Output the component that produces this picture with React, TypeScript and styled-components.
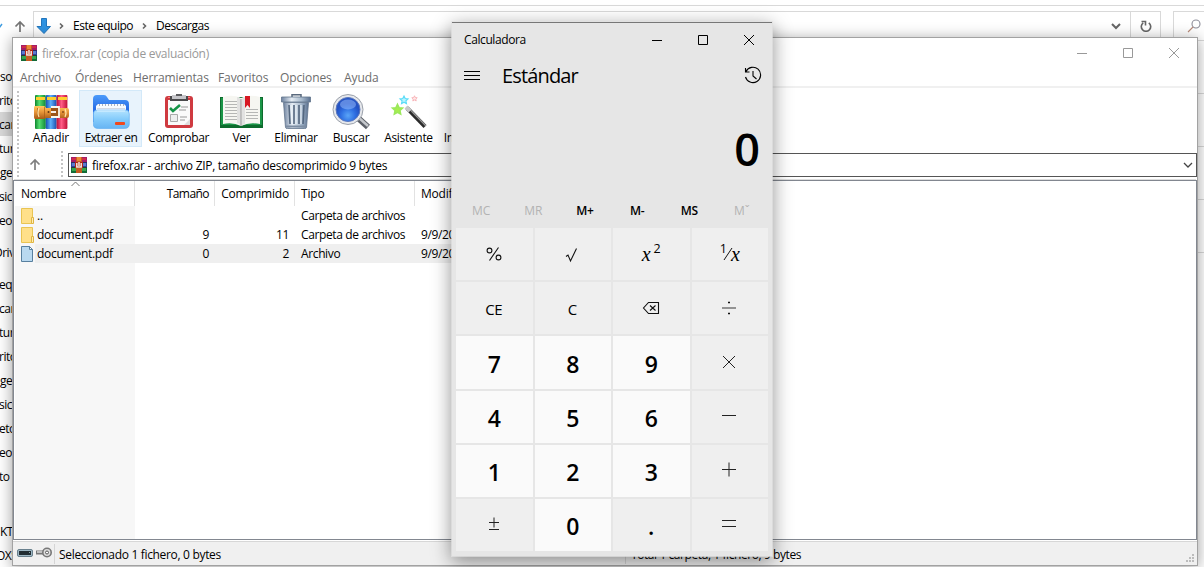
import React from 'react';
import styled, { createGlobalStyle, css } from 'styled-components';

const Global = createGlobalStyle`
  * { box-sizing: border-box; }
  html, body { margin: 0; background: #fff; overflow: hidden; }
  body { font-family: "Open Sans", "Noto Sans", sans-serif; font-size: 12px; color: #000; }
  svg { display: block; flex: none; }
`;

const Desktop = styled.div`
  position: relative;
  width: 1204px;
  height: 567px;
  overflow: hidden;
  background: #fff;
`;

const Label = styled.span<{ $ls?: number }>`
  letter-spacing: ${p => p.$ls ?? -0.2}px;
  white-space: pre;
`;

/* Explorer window at the back */
const Explorer = styled.div`
  display: flex;
  flex-direction: column;
  height: 567px;
`;
const ExplorerTop = styled.div`
  height: 6px;
  flex: none;
  border-bottom: 1px solid #d9d9d9;
`;
const ExplorerBar = styled.div`
  display: flex;
  padding-top: 5px;
  height: 35px;
  flex: none;
`;
const ExplorerNav = styled.div`
  width: 33px;
  flex: none;
  height: 30px;
  display: flex;
  align-items: center;
  justify-content: space-between;
  padding: 1px 7px 0 0;
`;
const Crumbs = styled.div`
  width: 1128px;
  flex: none;
  height: 30px;
  border: 1px solid #d9d9d9;
  display: flex;
  align-items: center;
  padding-left: 2px;
`;
const CrumbText = styled.span<{ $w: number }>`
  width: ${p => p.$w}px;
  display: block;
  line-height: 28px;
  letter-spacing: -0.5px;
  white-space: nowrap;
`;
const CrumbSep = styled.div`
  width: 21px;
  display: flex;
  justify-content: center;
`;
const CrumbEnd = styled.div`
  margin-left: auto;
  display: flex;
  align-items: center;
  height: 28px;
`;
const Refresh = styled.div`
  width: 30px;
  height: 28px;
  margin-left: 9px;
  border-left: 1px solid #d9d9d9;
  display: flex;
  align-items: center;
  justify-content: center;
`;
const SearchBox = styled.div`
  margin-left: 12px;
  width: 60px;
  flex: none;
  height: 30px;
  border: 1px solid #d9d9d9;
  padding: 7px 0 0 13px;
`;
const ExplorerBody = styled.div`
  display: flex;
  flex: 1;
  justify-content: space-between;
`;
const Tree = styled.div`
  width: 26px;
  padding-top: 23px;
  overflow: hidden;
`;
const TreeItem = styled.div<{ $gap?: number; $on?: boolean; $x?: number }>`
  height: 24px;
  line-height: 25px;
  margin-top: ${p => p.$gap ?? 0}px;
  background: ${p => (p.$on ? '#d9d9d9' : 'transparent')};
  text-indent: ${p => p.$x ?? -1}px;
  white-space: nowrap;
  letter-spacing: -0.5px;
`;
const Strip = styled.div`
  width: 10px;
  display: flex;
  flex-direction: column;
`;
const StripCell = styled.div`
  height: 53px;
  border-bottom: 1px solid #d9d9d9;
`;

/* Archive window */
const Archive = styled.div`
  position: absolute;
  left: 12px;
  top: 37px;
  width: 1186px;
  height: 529px;
  border: 1px solid #a2a2a2;
  background: #fff;
  box-shadow: 0 2px 14px rgba(0, 0, 0, 0.38);
  display: flex;
  flex-direction: column;
`;
const TitleBar = styled.div`
  height: 30px;
  flex: none;
  display: flex;
  align-items: center;
  padding: 0 17px 0 8px;
  gap: 5px;
  color: #999;
`;
const WinButtons = styled.div`
  margin-left: auto;
  display: flex;
  gap: 34px;
`;
const MenuBar = styled.div`
  height: 20px;
  flex: none;
  display: flex;
  padding-left: 7px;
  border-bottom: 2px solid #f0f0f0;
  color: #6d6d6d;
  line-height: 19px;
`;
const MenuItem = styled.span<{ $w: number }>`
  width: ${p => p.$w}px;
  letter-spacing: -0.1px;
  white-space: nowrap;
`;
const ToolBar = styled.div`
  height: 62px;
  flex: none;
  display: flex;
  padding: 2px 0 0 4px;
`;
const Grip = styled.div`
  width: 2px;
  margin-top: 1px;
  background: repeating-linear-gradient(#c4c4c4 0 2px, transparent 2px 4px);
`;
const Tool = styled.div<{ $w: number; $on?: boolean }>`
  width: ${p => p.$w}px;
  height: 57px;
  flex: none;
  display: flex;
  flex-direction: column;
  align-items: center;
  padding: 4px 0 0 1px;
  ${p =>
    p.$on &&
    css`
      background: #e8f3fc;
      box-shadow: inset 0 0 0 1px #d3e9f9;
    `}
`;
const IconSlot = styled.div`
  height: 35px;
`;
const ToolText = styled.span<{ $ls?: number }>`
  margin-top: 1px;
  line-height: 16px;
  letter-spacing: ${p => p.$ls ?? -0.25}px;
  white-space: nowrap;
`;
const AddressRow = styled.div`
  height: 28px;
  flex: none;
  display: flex;
  padding-left: 4px;
`;
const UpButton = styled.div`
  width: 42px;
  display: flex;
  align-items: center;
  padding-left: 10px;
`;
const Combo = styled.div`
  margin: 3px 0 0 5px;
  width: 1129px;
  height: 24px;
  border: 1px solid #555;
  display: flex;
  align-items: center;
  padding: 0 3px 0 2px;
  gap: 5px;
`;
const ComboArrow = styled.div`
  margin-left: auto;
`;
const ListFrame = styled.div`
  border: 1px solid #828790;
  margin-top: 2px;
  box-shadow: 0 -2px 0 -1px #dcdcdc;
  flex: 1;
  display: flex;
  flex-direction: column;
  background: linear-gradient(#f7f7f7, #f7f7f7) 1px 25px / 120px 333px no-repeat #fff;
`;
const HeadRow = styled.div`
  position: relative;
  height: 25px;
  display: flex;
  line-height: 25px;
`;
const HeadCell = styled.div<{ $w: number; $right?: boolean; $ls?: number }>`
  width: ${p => p.$w}px;
  border-right: 1px solid #e2e2e2;
  text-align: ${p => (p.$right ? 'right' : 'left')};
  padding: 0 ${p => (p.$right ? 5 : 0)}px 0 6px;
  letter-spacing: ${p => p.$ls ?? -0.2}px;
  white-space: nowrap;
`;
const SortMark = styled.div`
  position: absolute;
  left: 57px;
  top: 0;
`;
const FileRow = styled.div<{ $on?: boolean }>`
  height: 19px;
  display: flex;
  line-height: 19px;
  background: ${p => (p.$on ? 'linear-gradient(#efefef,#efefef) 21px 0 / 500px 19px no-repeat' : 'none')};
`;
const NameCell = styled.div`
  width: 121px;
  padding-left: 7px;
  display: flex;
  align-items: center;
  gap: 3px;
`;
const Cell = styled.div<{ $w: number; $right?: boolean }>`
  width: ${p => p.$w}px;
  padding: 0 6px;
  text-align: ${p => (p.$right ? 'right' : 'left')};
  letter-spacing: -0.37px;
  white-space: nowrap;
`;
const StatusBar = styled.div`
  height: 24px;
  flex: none;
  margin-top: 1px;
  border-top: 1px solid #d7d7d7;
  background: #f0f0f0;
  display: flex;
  align-items: center;
`;
const StatusIcons = styled.div`
  width: 42px;
  height: 20px;
  display: flex;
  gap: 3px;
  align-items: center;
  padding: 0 0 2px 4px;
  border-right: 1px solid #d5d5d5;
`;
const StatusPane = styled.div<{ $w: number; $last?: boolean }>`
  width: ${p => p.$w}px;
  height: 20px;
  line-height: 21px;
  padding-left: ${p => (p.$last ? 5 : 4)}px;
  border-right: ${p => (p.$last ? 'none' : '1px solid #d5d5d5')};
`;
const SizeGrip = styled.div`
  margin-left: auto;
  padding: 9px 2px 0 0;
`;

/* Calculator window */
const Calc = styled.div`
  position: absolute;
  left: 452px;
  top: 22px;
  width: 320px;
  height: 534px;
  background: #e6e6e6;
  border-top: 1px solid #777;
  box-shadow: 0 0 0 1px rgba(225, 225, 225, 0.75), 0 5px 18px 1px rgba(0, 0, 0, 0.42);
  display: flex;
  flex-direction: column;
`;
const CalcTitle = styled.div`
  height: 32px;
  display: flex;
  align-items: center;
  padding: 1px 17px 0 12px;
`;
const CalcMode = styled.div`
  height: 41px;
  display: flex;
  align-items: center;
  padding: 0 10px 0 12px;
  font-size: 20px;
`;
const MenuGlyph = styled.div`
  padding-bottom: 1px;
`;
const ModeName = styled.span`
  margin-left: 22px;
  letter-spacing: -0.85px;
  line-height: 41px;
`;
const History = styled.div`
  margin-left: auto;
  padding-bottom: 1px;
`;
const Display = styled.div`
  height: 102px;
  padding: 23px 12px 0 0;
  text-align: right;
  font: 600 45px/60px "Open Sans", sans-serif;
`;
const Memory = styled.div`
  height: 30px;
  margin: 0 4px 0 3px;
  display: grid;
  grid-template-columns: repeat(6, 1fr);
`;
const MemKey = styled.div<{ $off?: boolean }>`
  text-align: center;
  font-size: 12px;
  line-height: 26px;
  font-weight: ${p => (p.$off ? 400 : 600)};
  letter-spacing: ${p => (p.$off ? 0 : -0.3)}px;
  padding-right: ${p => (p.$off ? 0 : 1)}px;
  color: ${p => (p.$off ? '#b3b3b3' : '#000')};
`;
const Keys = styled.div`
  margin: 0 4px;
  height: 323px;
  display: grid;
  grid-template-columns: repeat(4, minmax(0, 1fr));
  grid-template-rows: repeat(6, minmax(0, 1fr));
  gap: 2px;
`;
const Key = styled.div<{ $num?: boolean }>`
  background: ${p => (p.$num ? '#fafafa' : '#efefef')};
  display: flex;
  align-items: center;
  justify-content: center;
  font-size: ${p => (p.$num ? 23 : 15)}px;
  font-weight: ${p => (p.$num ? 600 : 400)};
  padding-top: ${p => (p.$num ? 2.5 : 0)}px;
`;
const OpSlot = styled.div`
  padding: 0 1px 1px 0;
`;
const Dot = styled.span`
  font-size: 23px;
  font-weight: 600;
  padding-top: 3px;
`;
const Func = styled.span`
  display: flex;
  align-items: center;
  font-family: "Liberation Serif", serif;
  font-style: italic;
  font-size: 20px;
  line-height: 24px;
`;
const Sup = styled.span<{ $gap?: number }>`
  font-family: "Open Sans", sans-serif;
  font-size: 12.5px;
  font-style: normal;
  padding-bottom: 11px;
  margin-left: ${p => p.$gap ?? 0}px;
`;
const Slash = styled.svg`
  margin: 0 -2px 0 -4px;
`;
const Small = styled.span`
  letter-spacing: -0.4px;
  padding: 1px 1px 0 0;
`;

const RarIcon = () => (
  <svg width="16" height="16" viewBox="0 0 16 16">
    <path fill="#a51d68" d="M0 0h16v5H0z" />
    <path fill="#cf2b48" d="M1 1h4v2H1zM11 1h4v2h-4z" />
    <path fill="#2b419b" d="M0 5h16v5H0z" />
    <path fill="#5b7bd0" d="M1 6h3v3H1zM12 6h3v3h-3z" />
    <path fill="#146b37" d="M0 10h16v6H0z" />
    <path fill="#36a64b" d="M1 11h4v3H1zM11 11h4v3h-4z" />
    <path fill="#c65c22" d="M5 0h6v16H5z" />
    <path fill="#e98b36" d="M6 0h4v4H6z" />
    <path fill="#b22618" d="M4 5h8v6H4z" />
    <path fill="none" stroke="#f4e9dc" strokeWidth="1.5" d="M5.8 6v4h4.400V6M8 5v4" />
    <path stroke="#30203d" d="M0 5.5h4M12 5.5h4M0 10.5h4M12 10.5h4" opacity=".6" />
  </svg>
);

const BooksIcon = () => (
  <svg width="36" height="35" viewBox="0 0 36 35">
    <defs>
      <linearGradient id="bg"><stop stopColor="#0d872e" /><stop offset=".4" stopColor="#55dd70" /><stop offset="1" stopColor="#108a35" /></linearGradient>
      <linearGradient id="bb"><stop stopColor="#174fae" /><stop offset=".45" stopColor="#5eb0fa" /><stop offset="1" stopColor="#1a4fae" /></linearGradient>
      <linearGradient id="br"><stop stopColor="#b8103a" /><stop offset=".45" stopColor="#ff5c86" /><stop offset="1" stopColor="#c01038" /></linearGradient>
      <linearGradient id="bo" x2="0" y2="1"><stop stopColor="#ffc95e" /><stop offset=".45" stopColor="#e9973a" /><stop offset="1" stopColor="#a85a16" /></linearGradient>
    </defs>
    <rect x="2" y="1" width="10.800" height="34" rx="1" fill="url(#bg)" />
    <rect x="12.800" y="1" width="10.800" height="34" rx="1" fill="url(#bb)" />
    <rect x="23.600" y="1" width="10.800" height="34" rx="1" fill="url(#br)" />
    <path fill="#ffcf2e" d="M3 3h9v3H3zM14 3h9v3h-9zM25 3h9v3h-9z" />
    <path fill="url(#bo)" d="M2 12h9q2 1 2 2h21q2 0 2 2v6q0 2-2 2H13l-2 1H2q-1 0-1-2V14q0-2 1-2z" />
    <path fill="none" stroke="#a65d16" d="M11.500 13v11M4.500 14v9" opacity=".7" />
    <path fill="none" stroke="#ffe3a6" strokeWidth="1.200" d="M6 14q-2 5 0 9M32 15q2 4 0 8" />
    <path fill="#9c5418" d="M18 13h9v11h-9z" />
    <path fill="none" stroke="#fbf8ee" strokeWidth="1.800" d="M18 13h8v10h-8" />
    <path stroke="#fff" strokeWidth="1.800" d="M18 18h5" />
    <circle cx="15.500" cy="18" r="1" fill="#5f3511" /><circle cx="30" cy="18" r="1" fill="#8a4c18" />
  </svg>
);

const FolderIcon = () => (
  <svg width="37" height="35" viewBox="0 0 37 35">
    <defs>
      <linearGradient id="f1" x2="0" y2="1"><stop stopColor="#4b9bfb" /><stop offset=".5" stopColor="#2b6fe6" /><stop offset="1" stopColor="#2b6fe6" /></linearGradient>
      <linearGradient id="f2" x2="0" y2="1"><stop stopColor="#b4e3ff" /><stop offset=".5" stopColor="#84cbfb" /><stop offset="1" stopColor="#67b4f3" /></linearGradient>
    </defs>
    <path fill="url(#f1)" d="M0 5q0-4 4-4h7q2 0 3 2l2 3h16q4 0 4 4v18H0z" />
    <path fill="#f7faff" d="M3 12l2-2h26l2 2v9H3z" />
    <path stroke="#a9aeba" strokeWidth="2" d="M6 11h25" strokeDasharray="1 2" />
    <path stroke="#d4d9e4" d="M4 14.500h28" />
    <path fill="url(#f2)" stroke="#5aa9f0" strokeWidth=".6" d="M.3 20q0-4 4-4h28q4 0 4 4v10q0 4.500-5 4.500h-26q-5 0-5-4.500z" />
    <path stroke="#def4ff" d="M4 17h28" />
    <rect x="22" y="28" width="10" height="3" rx="1" fill="#f0481c" />
  </svg>
);

const ClipIcon = () => (
  <svg width="30" height="35" viewBox="0 0 30 35">
    <rect x="1" y="2" width="28" height="32" rx="3" fill="#cf3a40" />
    <path stroke="#ff7f80" d="M4 3.500h22" />
    <path fill="#fafafa" d="M4 6h22v25H4z" />
    <path fill="#4a4a4c" d="M6 2h18v5H6z" />
    <path fill="#c6c6ca" d="M8 1h14v4H8z" />
    <path fill="#5d5d60" d="M12 0h6v2h-6z" />
    <path fill="none" stroke="#159447" strokeWidth="2.600" d="M6 14l3 3 7-6" />
    <path stroke="#999" strokeWidth="1.200" d="M17 13h7M15 16h7M16 23h7M16 26h5" />
    <path fill="#eee" stroke="#aaa" d="M6.500 20.500h7v7h-7z" />
    <path fill="#ddd" d="M20 31l6-6v6z" />
  </svg>
);

const BookIcon = () => (
  <svg width="43" height="35" viewBox="0 0 43 35">
    <path fill="#0d6b2d" d="M0 3h43v31H0z" />
    <path fill="#1b9547" d="M1 4h41v27H1z" />
    <path fill="#f6f6f1" d="M3 3q10-3 18 1 8-4 19-1v27q-11-2-19 2-8-4-18-2z" />
    <path fill="#ddd" d="M17 3q4 1 4 3v26q-2-3-4-3zM22 5l3-2v27l-4 2z" opacity=".8" />
    <path stroke="#b6b7b5" d="M5 7.500h12M5 10.500h12M5 13.500h12M5 16.500h12M5 19.500h12M5 22.500h12M5 25.500h12M26 15.500h12M26 18.500h12M26 21.500h12M26 24.500h12" />
    <path fill="#d71923" d="M25 2h5v12l-2.500-3-2.500 3z" />
    <path stroke="#999" d="M21 5v27" />
  </svg>
);

const TrashIcon = () => (
  <svg width="32" height="36" viewBox="0 0 32 36">
    <defs><linearGradient id="tr"><stop stopColor="#6f83a0" /><stop offset=".35" stopColor="#e6edf4" /><stop offset=".7" stopColor="#a7b9cc" /><stop offset="1" stopColor="#5b7190" /></linearGradient></defs>
    <path fill="none" stroke="#59697d" strokeWidth="1.500" d="M12 3V.8h9V3" />
    <path fill="url(#tr)" stroke="#61738c" strokeWidth=".8" d="M1.500 3h29v5h-29z" />
    <path fill="url(#tr)" stroke="#61738c" strokeWidth=".8" d="M3.500 8.500h25l-2 25q0 1-2 1h-17q-2 0-2-1z" />
    <path stroke="#54677f" strokeWidth="1.600" d="M9 11l1 19M14 11v19M19 11v19M24 11l-1 19" />
    <path stroke="#edf4fa" d="M11 11l1 19M16 11v19M21 11v19" />
    <path stroke="#7c8da3" strokeWidth="2" d="M6 32.500h20" />
  </svg>
);

const MagnifierIcon = () => (
  <svg width="38" height="36" viewBox="0 0 38 36">
    <defs><radialGradient id="mg" cx=".5" cy=".75"><stop stopColor="#5aa5f8" /><stop offset=".6" stopColor="#2f6fe2" /><stop offset="1" stopColor="#2453c4" /></radialGradient></defs>
    <path stroke="#5c6068" strokeWidth="6" d="M26 24l10 9" />
    <path stroke="#c4c7cb" strokeWidth="2.500" d="M26 23l10 9" />
    <circle cx="16" cy="15.500" r="15" fill="#e6e8ec" stroke="#9aa0aa" />
    <circle cx="16" cy="15.500" r="12" fill="url(#mg)" stroke="#5a77bd" />
    <ellipse cx="16" cy="10.500" rx="8" ry="5" fill="#9cc2ff" opacity=".5" />
  </svg>
);

const star = 'M0-5l1.500 3.200 3.500.4-2.600 2.400.7 3.500L0 2.800-3.100 4.500-2.400 1-5-1.400l3.500-.4z';
const WandIcon = () => (
  <svg width="38" height="36" viewBox="0 0 38 36">
    <path stroke="#2b2b2b" strokeWidth="4" d="M17 14l18 18.500" />
    <path stroke="#999" strokeWidth="1.200" d="M18 13.500l18 18.500" />
    <path stroke="#c7c7c7" strokeWidth="4" d="M16 13l4 4" />
    <path fill="#a6ee4e" stroke="#9be85a" strokeWidth="1.600" d={star} transform="translate(7.500 15.500)" />
    <path fill="#b8f4ff" stroke="#5adcf8" strokeWidth="1.400" d={star} transform="translate(14 6) scale(.8)" />
    <path fill="#ffe6e6" stroke="#f5a3a8" strokeWidth="1.300" d={star} transform="translate(24.500 4.500) scale(.55)" />
  </svg>
);

const InfoIcon = () => (
  <svg width="34" height="34" viewBox="0 0 34 34"><circle cx="17" cy="17" r="15" fill="#2867dc" /><path stroke="#fff" strokeWidth="4" d="M17 14v12M17 8v3" /></svg>
);

const SmallFolder = () => (
  <svg width="13" height="16" viewBox="0 0 13 16">
    <path fill="#ffe08a" stroke="#e9c452" d="M.5.500h11v15H.5z" />
    <path fill="#ffeeb5" stroke="#e0b644" d="M10.500 9.500h2v6h-2z" />
  </svg>
);
const SmallFile = () => (
  <svg width="13" height="16" viewBox="0 0 13 16">
    <path fill="#b9d9f0" stroke="#58809f" d="M.5.500h8l3 3v12H.5z" />
    <path fill="#fff" stroke="#58809f" d="M8.500.500v3h3z" />
  </svg>
);
const UpArrow = ({ color = '#757575' }: { color?: string }) => (
  <svg width="12" height="13" viewBox="0 0 12 13" fill="none" stroke={color} strokeWidth="1.700"><path d="M6 12V2M1.500 6.500L6 2l4.500 4.500" /></svg>
);
const Chevron = ({ down = false, w = 1.6, c = '#666' }: { down?: boolean; w?: number; c?: string }) => (
  <svg width="10" height="8" viewBox="0 0 10 8" fill="none" stroke={c} strokeWidth={w}>
    <path d={down ? 'M1 2l4 4 4-4' : 'M2 1.500l2.500 2.500L2 6.500'} />
  </svg>
);
const WindowGlyphs = ({ color }: { color: string }) => (
  <>
    <svg width="12" height="12" stroke={color} fill="none"><path d="M1 6.500h10" /></svg>
    <svg width="12" height="12" stroke={color} fill="none"><path d="M1.500 1.500h9v9h-9z" /></svg>
    <svg width="12" height="12" stroke={color} fill="none"><path d="M1 1l10 10M11 1L1 11" /></svg>
  </>
);

type Node = [string, number?, boolean?, number?];
const tree: Node[] = [
  ['so', 0, false, 0], ['rito', 0], ['car', 0, true], ['tur'], ['ge', 0, false, 0], ['sica'], ['eos'],
  ['Drive', 8, false, -6], ['equ', 8], ['car'], ['tur'], ['rito'], ['ge', 0, false, 0], ['sica'], ['eto'], ['eos'], ['to'],
  ['KTO', 31, false, 0], ['OXS', 0, false, -4],
];

const tools: [string, number, React.ReactNode, number?][] = [
  ['Añadir', 57, <BooksIcon />, -0.1],
  ['Extraer en', 63, <FolderIcon />, -0.5],
  ['Comprobar', 72, <ClipIcon />, -0.36],
  ['Ver', 54, <BookIcon />],
  ['Eliminar', 55, <TrashIcon />, -0.3],
  ['Buscar', 55, <MagnifierIcon />],
  ['Asistente', 60, <WandIcon />, -0.32],
  ['Información', 75, <InfoIcon />, -0.3],
];

const menu: [string, number][] = [
  ['Archivo', 55], ['Órdenes', 58], ['Herramientas', 85], ['Favoritos', 62], ['Opciones', 64], ['Ayuda', 40],
];

const files = [
  { name: '..', size: '', packed: '', type: 'Carpeta de archivos', date: '' },
  { name: 'document.pdf', size: '9', packed: '11', type: 'Carpeta de archivos', date: '9/9/2023' },
  { name: 'document.pdf', size: '0', packed: '2', type: 'Archivo', date: '9/9/2023', file: true },
];

const Op = ({ d, w = 1 }: { d: string; w?: number }) => (
  <OpSlot><svg width="16" height="16" viewBox="0 0 16 16" fill="none" stroke="#222" strokeWidth={w}><path d={d} /></svg></OpSlot>
);

const keys: { k: React.ReactNode; num?: boolean }[] = [
  { k: <svg width="16" height="16" fill="none" stroke="#111" strokeWidth="1.100"><circle cx="3.500" cy="4.500" r="2.400" /><circle cx="12.500" cy="11.500" r="2.400" /><path d="M12.500 1.500l-9 13" /></svg> },
  { k: <OpSlot><svg width="16" height="18" fill="none" stroke="#111" strokeWidth="1.100"><path d="M2 11.500l2-1.500 2.500 6 6-12.500" /></svg></OpSlot> },
  { k: <Func>x<Sup $gap={3}>2</Sup></Func> },
  { k: <Func><Sup>1</Sup><Slash width="10" height="16" viewBox="0 0 10 16" stroke="#111"><path d="M1 14L9 2" /></Slash>x</Func> },
  { k: <Small>CE</Small> },
  { k: <Small>C</Small> },
  { k: <svg width="18" height="14" fill="none" stroke="#111" strokeWidth="1.100"><path d="M6.500 1.500h10v11h-10L1.500 7zM8 4.500l5.500 5M13.500 4.500l-5.500 5" /></svg> },
  { k: <OpSlot><svg width="16" height="16" stroke="#555" fill="none"><path d="M1 8h14" strokeWidth="1.200" /><path d="M7 2.500h2M7 13.500h2" stroke="#111" strokeWidth="1.500" /></svg></OpSlot> },
  { k: '7', num: true }, { k: '8', num: true }, { k: '9', num: true }, { k: <Op d="M2 2l12 12M14 2L2 14" /> },
  { k: '4', num: true }, { k: '5', num: true }, { k: '6', num: true }, { k: <Op d="M1 7.500h14" /> },
  { k: '1', num: true }, { k: '2', num: true }, { k: '3', num: true }, { k: <Op d="M1 7.500h14M8 .500v14" /> },
  { k: <Op d="M3 6.500h10M8 1.500v10M3 13.500h10" /> }, { k: '0', num: true }, { k: <Dot>.</Dot> }, { k: <Op d="M1 4.500h14M1 10.500h14" /> },
];

export default function App() {
  return (
    <Desktop>
      <Global />
      <Explorer>
        <ExplorerTop />
        <ExplorerBar>
          <ExplorerNav>
            <svg width="4" height="8" fill="none" stroke="#3d9be0" strokeWidth="1.500"><path d="M-3 2l2 3 3-4" /></svg>
            <UpArrow />
          </ExplorerNav>
          <Crumbs>
            <svg width="16" height="16" viewBox="0 0 16 16"><path fill="#2f93e2" stroke="#2376bd" d="M5.500.500h5v8h4L8 15.500l-7-7h4.500z" /></svg>
            <CrumbSep><Chevron /></CrumbSep>
            <CrumbText $w={62}>Este equipo</CrumbText>
            <CrumbSep><Chevron /></CrumbSep>
            <CrumbText $w={60}>Descargas</CrumbText>
            <CrumbEnd>
              <Chevron down w={2} />
              <Refresh>
                <svg width="12" height="12" viewBox="0 0 12 12" fill="none" stroke="#666" strokeWidth="1.600"><path d="M8.800 2.800a4.700 4.700 0 1 1-5.600 0M1.500 1.500h4v4" /></svg>
              </Refresh>
            </CrumbEnd>
          </Crumbs>
          <SearchBox>
            <svg width="15" height="15" fill="none" stroke="#8d8d99" strokeWidth="1.100"><circle cx="9" cy="5" r="4" /><path d="M6 8l-5 5" stroke="#b98a78" /></svg>
          </SearchBox>
        </ExplorerBar>
        <ExplorerBody>
          <Tree>
            {tree.map(([t, gap, on, x], i) => (
              <TreeItem key={i} $gap={gap} $on={on} $x={x}>{t}</TreeItem>
            ))}
          </Tree>
          <Strip><StripCell /><StripCell /><StripCell /><StripCell /></Strip>
        </ExplorerBody>
      </Explorer>

      <Archive>
        <TitleBar>
          <RarIcon />
          <Label $ls={-0.28}>firefox.rar (copia de evaluación)</Label>
          <WinButtons><WindowGlyphs color="#999" /></WinButtons>
        </TitleBar>
        <MenuBar>{menu.map(([t, w]) => <MenuItem key={t} $w={w}>{t}</MenuItem>)}</MenuBar>
        <ToolBar>
          <Grip />
          <Tool $w={3} />
          {tools.map(([t, w, icon, ls], i) => (
            <Tool key={t} $w={w} $on={i === 1}><IconSlot>{icon}</IconSlot><ToolText $ls={ls}>{t}</ToolText></Tool>
          ))}
        </ToolBar>
        <AddressRow>
          <Grip />
          <UpButton><UpArrow color="#808080" /></UpButton>
          <Grip />
          <Combo>
            <RarIcon />
            <Label $ls={-0.29}>firefox.rar - archivo ZIP, tamaño descomprimido 9 bytes</Label>
            <ComboArrow><Chevron down w={1.3} c="#444" /></ComboArrow>
          </Combo>
        </AddressRow>
        <ListFrame>
          <HeadRow>
            <HeadCell $w={121}><Label $ls={-0.2}>{'\u200a'}Nombre</Label></HeadCell>
            <HeadCell $w={80} $right $ls={-0.55}>Tamaño</HeadCell>
            <HeadCell $w={80} $right>Comprimido</HeadCell>
            <HeadCell $w={120}>Tipo</HeadCell>
            <HeadCell $w={120}>Modificado</HeadCell>
            <SortMark><svg width="9" height="6" fill="none" stroke="#777"><path d="M.5 5l4-4 4 4" /></svg></SortMark>
          </HeadRow>
          {files.map((f, i) => (
            <FileRow key={i} $on={f.file}>
              <NameCell>{f.file ? <SmallFile /> : <SmallFolder />}<Label $ls={-0.27}>{f.name}</Label></NameCell>
              <Cell $w={80} $right>{f.size}</Cell>
              <Cell $w={80} $right>{f.packed}</Cell>
              <Cell $w={120}>{f.type}</Cell>
              <Cell $w={120}>{f.date}</Cell>
            </FileRow>
          ))}
        </ListFrame>
        <StatusBar>
          <StatusIcons>
            <svg width="16" height="8"><rect x=".5" y=".5" width="15" height="7" rx="1.500" fill="#9db7c4" stroke="#69808d" /><path fill="#222d33" d="M2 2h12v4H2z" /><path fill="#8aa" d="M12 3h1v1h-1z" /></svg>
            <svg width="16" height="11" fill="none"><path stroke="#777" strokeWidth="4" d="M0 5.500h8" /><path stroke="#ddd" strokeWidth="1.500" d="M1 5h7" /><circle cx="11" cy="5.500" r="4.200" stroke="#777" strokeWidth="1.600" fill="#ddd" /><circle cx="11" cy="5.500" r="1.500" stroke="#555" fill="#fff" /></svg>
          </StatusIcons>
          <StatusPane $w={571}><Label $ls={-0.32}>Seleccionado 1 fichero, 0 bytes</Label></StatusPane>
          <StatusPane $w={540} $last><Label $ls={-0.42}>Total 1 carpeta, 1 fichero, 9 bytes</Label></StatusPane>
          <SizeGrip>
            <svg width="9" height="9" fill="#bcbcbc"><path d="M6 0h2v2H6zM3 3h2v2H3zM6 3h2v2H6zM0 6h2v2H0zM3 6h2v2H3zM6 6h2v2H6z" /></svg>
          </SizeGrip>
        </StatusBar>
      </Archive>

      <Calc>
        <CalcTitle>
          <Label $ls={-0.4}>Calculadora</Label>
          <WinButtons><WindowGlyphs color="#000" /></WinButtons>
        </CalcTitle>
        <CalcMode>
          <MenuGlyph><svg width="16" height="12" stroke="#000"><path d="M0 2.500h16M0 6.500h16M0 10.500h16" /></svg></MenuGlyph>
          <ModeName>Estándar</ModeName>
          <History>
            <svg width="18" height="18" fill="none" stroke="#000" strokeWidth="1.100"><path d="M2 5.500A7.700 7.700 0 1 1 1.500 11M1.500 2v4h4M9 5v5l3.500 3" /></svg>
          </History>
        </CalcMode>
        <Display>0</Display>
        <Memory>
          <MemKey $off>MC</MemKey><MemKey $off>MR</MemKey><MemKey>M+</MemKey><MemKey>M-</MemKey><MemKey>MS</MemKey><MemKey $off>Mˇ</MemKey>
        </Memory>
        <Keys>{keys.map((b, i) => <Key key={i} $num={b.num}>{b.k}</Key>)}</Keys>
      </Calc>
    </Desktop>
  );
}
